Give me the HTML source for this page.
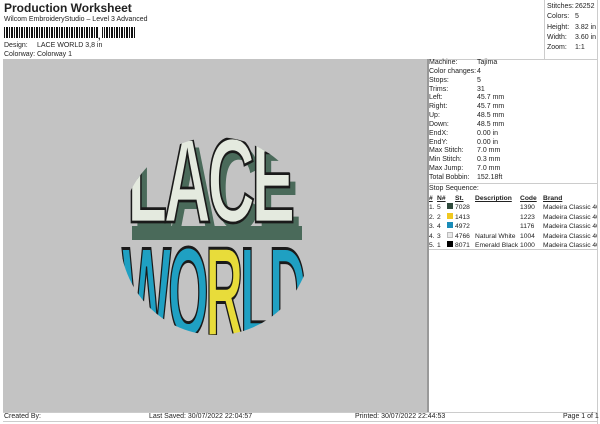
<!DOCTYPE html>
<html><head><meta charset="utf-8"><style>
*{margin:0;padding:0;box-sizing:border-box}
body{width:600px;height:424px;background:#fff;font-family:"Liberation Sans",sans-serif;color:#222;position:relative;overflow:hidden;font-size:7px}
.a{position:absolute;white-space:nowrap}
.t{font-size:12px;font-weight:bold;left:4px;top:1px}
.r td{font-size:6.7px;padding:0;line-height:9.4px;white-space:nowrap;overflow:hidden}
</style></head><body>
<div class="a t">Production Worksheet</div>
<div class="a" style="left:4px;top:16px">Wilcom EmbroideryStudio – Level 3 Advanced</div>
<div class="a" style="left:4px;top:27px;width:132px;height:11px;background:repeating-linear-gradient(90deg,#111 0 1px,#fff 1px 2px,#111 2px 4px,#fff 4px 5px)"></div>
<div class="a" style="left:98px;top:27px;width:4px;height:11px;background:#fff"></div>
<div class="a" style="left:98px;top:31px;font-weight:bold;font-size:9px">,</div>
<div class="a" style="left:4px;top:42px">Design:</div><div class="a" style="left:37px;top:42px">LACE WORLD 3,8 in</div>
<div class="a" style="left:4px;top:51px">Colorway:</div><div class="a" style="left:37px;top:51px">Colorway 1</div>
<div class="a" style="left:544px;top:0;width:1px;height:59px;background:#ccc"></div>
<div class="a" style="left:597px;top:0;width:1px;height:424px;background:#ccc"></div>
<div class="a" style="left:547px;top:2px;line-height:10.3px">Stitches:<br>Colors:<br>Height:<br>Width:<br>Zoom:</div>
<div class="a" style="left:575px;top:2px;line-height:10.3px">26252<br>5<br>3.82 in<br>3.60 in<br>1:1</div>
<div class="a" style="left:3px;top:59px;width:594px;height:1px;background:#ccc"></div>
<div class="a" style="left:3px;top:59px;width:424px;height:353px;background:#c3c3c3"></div>
<div class="a" style="left:427px;top:59px;width:2px;height:353px;background:#999"></div>
<div class="a" style="left:429px;top:59px;line-height:8.85px">Machine:<br>Color changes:<br>Stops:<br>Trims:<br>Left:<br>Right:<br>Up:<br>Down:<br>EndX:<br>EndY:<br>Max Stitch:<br>Min Stitch:<br>Max Jump:<br>Total Bobbin:</div>
<div class="a" style="left:477px;top:59px;line-height:8.85px">Tajima<br>4<br>5<br>31<br>45.7 mm<br>45.7 mm<br>48.5 mm<br>48.5 mm<br>0.00 in<br>0.00 in<br>7.0 mm<br>0.3 mm<br>7.0 mm<br>152.18ft</div>
<div class="a" style="left:429px;top:183px;width:168px;height:1px;background:#ccc"></div>
<div class="a" style="left:429px;top:185px">Stop Sequence:</div>
<table class="a r" style="left:429px;top:194px;border-collapse:collapse;table-layout:fixed;width:168px">
<colgroup><col style="width:8px"><col style="width:10px"><col style="width:8px"><col style="width:20px"><col style="width:45px"><col style="width:23px"><col></colgroup>
<tr style="font-weight:bold;text-decoration:underline"><td>#</td><td>N#</td><td></td><td>St.</td><td>Description</td><td>Code</td><td>Brand</td></tr>
<tr><td>1.</td><td>5</td><td><i style="display:inline-block;width:6px;height:6px;background:#2f4a3c"></i></td><td>7028</td><td></td><td>1390</td><td>Madeira Classic 40</td></tr>
<tr><td>2.</td><td>2</td><td><i style="display:inline-block;width:6px;height:6px;background:#f0c820"></i></td><td>1413</td><td></td><td>1223</td><td>Madeira Classic 40</td></tr>
<tr><td>3.</td><td>4</td><td><i style="display:inline-block;width:6px;height:6px;background:#1a8cb8"></i></td><td>4972</td><td></td><td>1176</td><td>Madeira Classic 40</td></tr>
<tr><td>4.</td><td>3</td><td><i style="display:inline-block;width:6px;height:6px;background:#e8e8e8;border:1px solid #bbb"></i></td><td>4766</td><td>Natural White</td><td>1004</td><td>Madeira Classic 40</td></tr>
<tr><td>5.</td><td>1</td><td><i style="display:inline-block;width:6px;height:6px;background:#000"></i></td><td>8071</td><td>Emerald Black</td><td>1000</td><td>Madeira Classic 40</td></tr>
</table>
<div class="a" style="left:429px;top:249px;width:168px;height:1px;background:#ccc"></div>
<svg class="a" style="left:0;top:0" width="600" height="424">
<defs><clipPath id="c"><ellipse cx="216" cy="236" rx="96" ry="99"/></clipPath></defs>
<g font-family="Liberation Sans" font-weight="bold" clip-path="url(#c)">
<text x="0" y="0" transform="translate(133,230) scale(1.27,2.3)" font-size="52" fill="#4a6a5a" letter-spacing="-3">LACE</text>
<text x="0" y="0" transform="translate(127,222) scale(1.27,2.3)" font-size="52" fill="#e4eadf" stroke="#1a1a1a" stroke-width="1.2" letter-spacing="-3">LACE</text>
<rect x="132" y="226" width="170" height="14" fill="#4a6a5a"/>
<text x="0" y="0" transform="translate(122,336) scale(1.0,2.45)" font-size="52" fill="#1fa0c2" stroke="#1a1a1a" stroke-width="1.2" letter-spacing="-3">WO<tspan fill="#e8dc3a">R</tspan>LD</text>
</g></svg>
<div class="a" style="left:3px;top:412px;width:594px;height:1px;background:#ccc"></div>
<div class="a" style="left:3px;top:421px;width:594px;height:1px;background:#ccc"></div>
<div class="a" style="left:4px;top:413px">Created By:</div>
<div class="a" style="left:149px;top:413px">Last Saved: 30/07/2022 22:04:57</div>
<div class="a" style="left:355px;top:413px">Printed: 30/07/2022 22:44:53</div>
<div class="a" style="left:563px;top:413px">Page 1 of 1</div>
</body></html>
